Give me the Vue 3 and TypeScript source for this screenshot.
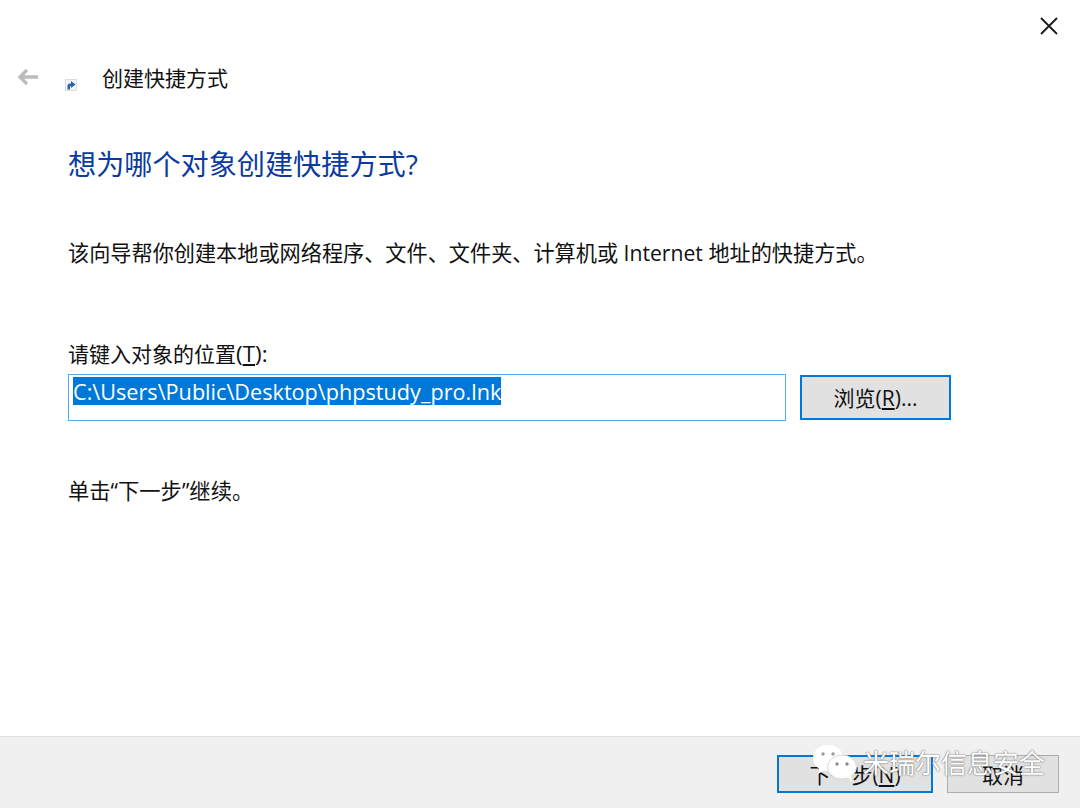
<script setup lang="ts">
const introText = '该向导帮你创建本地或网络程序、文件、文件夹、计算机或 Internet 地址的快捷方式。'
const targetPath = 'C:\\Users\\Public\\Desktop\\phpstudy_pro.lnk'
</script>

<template>
  <div class="wizard">
    <div class="top-bar">
      <svg class="close" width="20" height="20" viewBox="0 0 20 20">
        <path d="M2 2 L18 18 M18 2 L2 18" stroke="#1a1a1a" stroke-width="1.8" fill="none" />
      </svg>
    </div>

    <div class="title-row">
      <svg class="back" width="22" height="18" viewBox="0 0 22 18">
        <path d="M10 2 L3 9 L10 16 M3 9 H21" stroke="#bcbcbc" stroke-width="3.4" fill="none" />
      </svg>
      <svg class="shortcut" width="12" height="12" viewBox="0 0 12 12">
        <rect width="12" height="12" fill="#dcdcdc" />
        <rect x="1" y="1" width="10" height="10" fill="#f4f4f4" />
        <path d="M2.5 10.5 V7 Q2.5 4.5 5 4.5 H6 V2 L10.5 5.5 L6 9 V7 H5.5 Q5 7 5 8 V10.5 Z" fill="#2a63ad" />
      </svg>
      <span class="title">创建快捷方式</span>
    </div>

    <main class="content">
      <h1 class="heading">想为哪个对象创建快捷方式?</h1>
      <p class="intro">{{ introText }}</p>

      <label class="field-label">请键入对象的位置<span class="mnemonic">(<u>T</u>):</span></label>
      <div class="field-row">
        <div class="path-input"><span class="selected">{{ targetPath }}</span></div>
        <button class="btn browse">浏览(<u>R</u>)...</button>
      </div>

      <p class="hint">单击“下一步”继续。</p>
    </main>

    <footer class="footer">
      <button class="btn next">下一步(<u>N</u>)</button>
      <button class="btn cancel">取消</button>
    </footer>
    <div class="bottom-gap"></div>

    <div class="watermark">
      <svg width="50" height="38" viewBox="0 0 50 38">
        <ellipse cx="17" cy="14" rx="15" ry="13" fill="#fff" />
        <path d="M8 23 L7 30 L15 25 Z" fill="#fff" />
        <circle cx="12" cy="10" r="1.7" fill="#9a9a9a" />
        <circle cx="22" cy="10" r="1.7" fill="#9a9a9a" />
        <ellipse cx="31" cy="23" rx="14.5" ry="12" fill="#fff" stroke="#d8d8d8" stroke-width="1" />
        <path d="M37 33 L41 38 L40 31 Z" fill="#fff" />
        <circle cx="26" cy="20" r="1.7" fill="#8a8a8a" />
        <circle cx="36" cy="20" r="1.7" fill="#8a8a8a" />
      </svg>
      <span class="watermark-text">米瑞尔信息安全</span>
    </div>
  </div>
</template>

<style>
html,
body {
  margin: 0;
  background: #fff;
}
</style>

<style scoped>
.wizard {
  position: relative;
  width: 1080px;
  height: 810px;
  display: flex;
  flex-direction: column;
  overflow: hidden;
  background: #fff;
  color: #111;
  font-family: "Open Sans", "Noto Sans CJK SC", sans-serif;
  font-size: 21px;
}

.top-bar {
  height: 58px;
  display: flex;
  justify-content: flex-end;
  align-items: flex-start;
  padding: 16px 21px 0 0;
  box-sizing: border-box;
}

.title-row {
  height: 40px;
  display: flex;
  align-items: center;
  padding-left: 17px;
}

.back {
  margin-right: 26px;
  margin-top: -3px;
}

.shortcut {
  margin-top: 14px;
  margin-right: 25px;
}

.title {
  line-height: 40px;
}

.content {
  flex: 1;
  padding: 0 0 0 68px;
}

.heading {
  margin: 45px 0 0;
  font-size: 28.15px;
  font-weight: 400;
  line-height: 42px;
  color: #0a3aa0;
}

.intro {
  margin: 52px 0 0;
  font-size: 21.17px;
  line-height: 32px;
}

.field-label {
  display: block;
  margin-top: 69px;
  line-height: 32px;
}

.mnemonic {
  font-size: 22.5px;
}

.field-row {
  display: flex;
  align-items: center;
  gap: 14px;
  margin-top: 4px;
}

.path-input {
  width: 718px;
  height: 47px;
  box-sizing: border-box;
  border: 1px solid #5aa9ea;
  padding: 2px 0 0 4px;
  background: #fff;
}

.selected {
  display: inline-block;
  height: 28px;
  line-height: 29px;
  background: #0078d7;
  color: #fff;
  font-size: 21.65px;
}

.btn {
  box-sizing: border-box;
  height: 45px;
  padding: 0;
  font: inherit;
  color: #111;
  background: #e1e1e1;
  border: 1px solid #adadad;
}

.btn u {
  text-underline-offset: 2px;
}

.browse {
  width: 151px;
  border: 2px solid #0078d7;
  padding-bottom: 2px;
}

.hint {
  margin: 54px 0 0;
  font-size: 21.3px;
  line-height: 32px;
}

.footer {
  height: 72px;
  display: flex;
  align-items: center;
  justify-content: flex-end;
  gap: 14px;
  padding-right: 21px;
  box-sizing: border-box;
  background: #f0f0f0;
  border-top: 1px solid #dfdfdf;
}

.next,
.cancel {
  height: 38px;
  margin-top: 2px;
}

.next {
  width: 156px;
  border: 1px solid #0078d7;
  box-shadow: inset 0 0 0 1px #0078d7;
}

.cancel {
  width: 112px;
}

.bottom-gap {
  height: 2px;
  background: #fff;
}

.watermark {
  position: absolute;
  left: 811px;
  top: 741px;
  display: flex;
  align-items: center;
  gap: 2px;
}

.watermark-text {
  font-size: 26px;
  line-height: 44px;
  color: #fff;
  text-shadow: 0 0 2px #777, 0 0 1px #777;
  white-space: nowrap;
}
</style>
